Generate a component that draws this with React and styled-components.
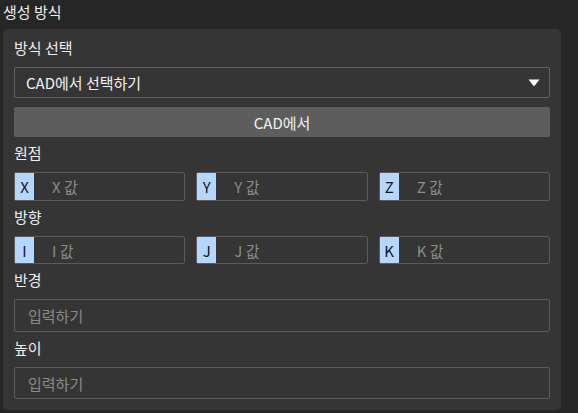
import React from 'react'
import styled, { createGlobalStyle } from 'styled-components'

const Global = createGlobalStyle`
  html, body {
    margin: 0;
    padding: 0;
    background: #262626;
  }
  body {
    font-family: "Noto Sans CJK KR", "Noto Sans", "Liberation Sans", sans-serif;
    color: #ededed;
  }
  * { box-sizing: border-box; }
`

const Page = styled.div`
  width: 578px;
  height: 413px;
  padding: 0 17px 0 3px;
  overflow: hidden;
`

const Title = styled.div`
  font-size: 15px;
  line-height: 24px;
  height: 29px;
  color: #eeeeee;
`

const Panel = styled.div`
  background: #353535;
  border-radius: 5px;
  padding: 9px 11px 11px;
  display: flex;
  flex-direction: column;
`

const Label = styled.div`
  font-size: 15px;
  line-height: 20px;
  height: 20px;
  color: #eeeeee;
  margin: ${p => (p.$first ? '0 0 9px' : '6px 0 9px')};
`

const Select = styled.div`
  height: 31px;
  border: 1px solid #636363;
  border-radius: 2px;
  display: flex;
  align-items: center;
  justify-content: space-between;
  padding: 0 9px 0 11px;
  font-size: 15px;
  color: #f2f2f2;
`

const Caret = styled.svg`
  width: 12px;
  height: 8px;
`

const Button = styled.div`
  margin-top: 9px;
  height: 30px;
  background: #5d5d5d;
  border-radius: 2px;
  display: flex;
  align-items: center;
  justify-content: center;
  font-size: 15px;
  color: #f2f2f2;
`

const Row = styled.div`
  display: grid;
  grid-template-columns: repeat(3, 1fr);
  gap: 11px;
`

const Axis = styled.div`
  height: ${p => p.$h}px;
  border: 1px solid #5b5b5b;
  border-radius: 2px;
  display: flex;
  align-items: center;
  font-size: 15px;
`

const Prefix = styled.span`
  width: 19px;
  align-self: stretch;
  background: #b5d6fe;
  color: #141414;
  display: flex;
  align-items: center;
  justify-content: center;
`

const Hint = styled.span`
  margin-left: 18px;
  color: #8c8c8c;
`

const Input = styled.div`
  height: ${p => p.$h}px;
  border: 1px solid #5b5b5b;
  border-radius: 2px;
  display: flex;
  align-items: center;
  padding-left: 13px;
  font-size: 15px;
  color: #8a8a8a;
`

const AxisRow = ({ keys, h }) => (
  <Row>
    {keys.map(k => (
      <Axis key={k} $h={h}>
        <Prefix>{k}</Prefix>
        <Hint>{k} 값</Hint>
      </Axis>
    ))}
  </Row>
)

export default function App() {
  return (
    <Page>
      <Global />
      <Title>생성 방식</Title>
      <Panel>
        <Label $first>방식 선택</Label>
        <Select>
          <span>CAD에서 선택하기</span>
          <Caret viewBox="0 0 12 8">
            <path d="M0.5 0.5 L11.5 0.5 L6.8 6.6 Q6 7.5 5.2 6.6 Z" fill="#ffffff" />
          </Caret>
        </Select>
        <Button>CAD에서</Button>
        <Label>원점</Label>
        <AxisRow keys={['X', 'Y', 'Z']} h={29} />
        <Label>방향</Label>
        <AxisRow keys={['I', 'J', 'K']} h={28} />
        <Label>반경</Label>
        <Input $h={33}>입력하기</Input>
        <Label>높이</Label>
        <Input $h={32}>입력하기</Input>
      </Panel>
    </Page>
  )
}
